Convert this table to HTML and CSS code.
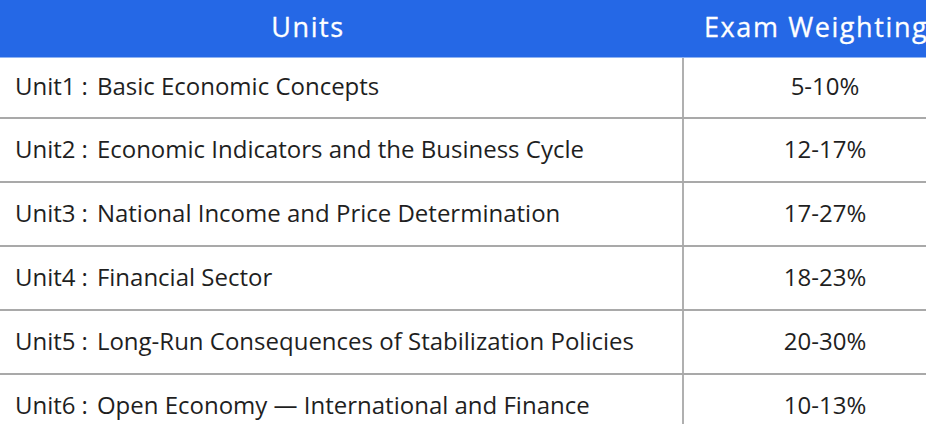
FILE: index.html
```html
<!DOCTYPE html>
<html>
<head>
<meta charset="utf-8">
<link rel="stylesheet" href="styles.css">
</head>
<body>
<div class="table">
  <div class="row head">
    <div class="cell c1">Units</div>
    <div class="cell c2">Exam Weighting</div>
  </div>
  <div class="row first">
    <div class="cell c1">Unit1<span class="sep">:</span>Basic Economic Concepts</div>
    <div class="cell c2">5-10%</div>
  </div>
  <div class="row">
    <div class="cell c1">Unit2<span class="sep">:</span>Economic Indicators and the Business Cycle</div>
    <div class="cell c2">12-17%</div>
  </div>
  <div class="row">
    <div class="cell c1">Unit3<span class="sep">:</span>National Income and Price Determination</div>
    <div class="cell c2">17-27%</div>
  </div>
  <div class="row">
    <div class="cell c1">Unit4<span class="sep">:</span>Financial Sector</div>
    <div class="cell c2">18-23%</div>
  </div>
  <div class="row">
    <div class="cell c1">Unit5<span class="sep">:</span>Long-Run Consequences of Stabilization Policies</div>
    <div class="cell c2">20-30%</div>
  </div>
  <div class="row">
    <div class="cell c1">Unit6<span class="sep">:</span>Open Economy — International and Finance</div>
    <div class="cell c2">10-13%</div>
  </div>
</div>
</body>
</html>
```
FILE: styles.css
```css
html, body {
  margin: 0;
  padding: 0;
  background: #ffffff;
  overflow: hidden;
  width: 926px;
  height: 424px;
}
.table {
  width: 966px;
  font-family: "Open Sans", "Noto Sans CJK SC", sans-serif;
  color: #1f1f1f;
}
.row {
  display: flex;
  height: 62px;
  border-bottom: 2px solid #a9a9a9;
}
.row.first {
  height: 59px;
}
.row.head {
  height: 57px;
  background: #2568e6;
  border-bottom: 1px solid #8fb3f2;
  color: #ffffff;
}
.cell {
  display: flex;
  align-items: center;
  padding-bottom: 4px;
  box-sizing: border-box;
  white-space: nowrap;
}
.sep {
  padding: 0 9px 0 6px;
}
.c1 {
  width: 682px;
  padding-left: 15px;
  font-size: 24px;
}
.c2 {
  width: 284px;
  justify-content: center;
  border-left: 2px solid #b0b0b0;
  font-size: 24px;
}
.head .cell {
  font-size: 27px;
  font-weight: 500;
  letter-spacing: 1.6px;
  border-left: none;
  padding-bottom: 5px;
  -webkit-text-stroke: 0.3px #ffffff;
}
.head .c1 {
  justify-content: center;
  padding-left: 0;
  padding-right: 66px;
}
.head .c2 {
  justify-content: flex-start;
  padding-left: 22px;
  padding-right: 0;
}
```
